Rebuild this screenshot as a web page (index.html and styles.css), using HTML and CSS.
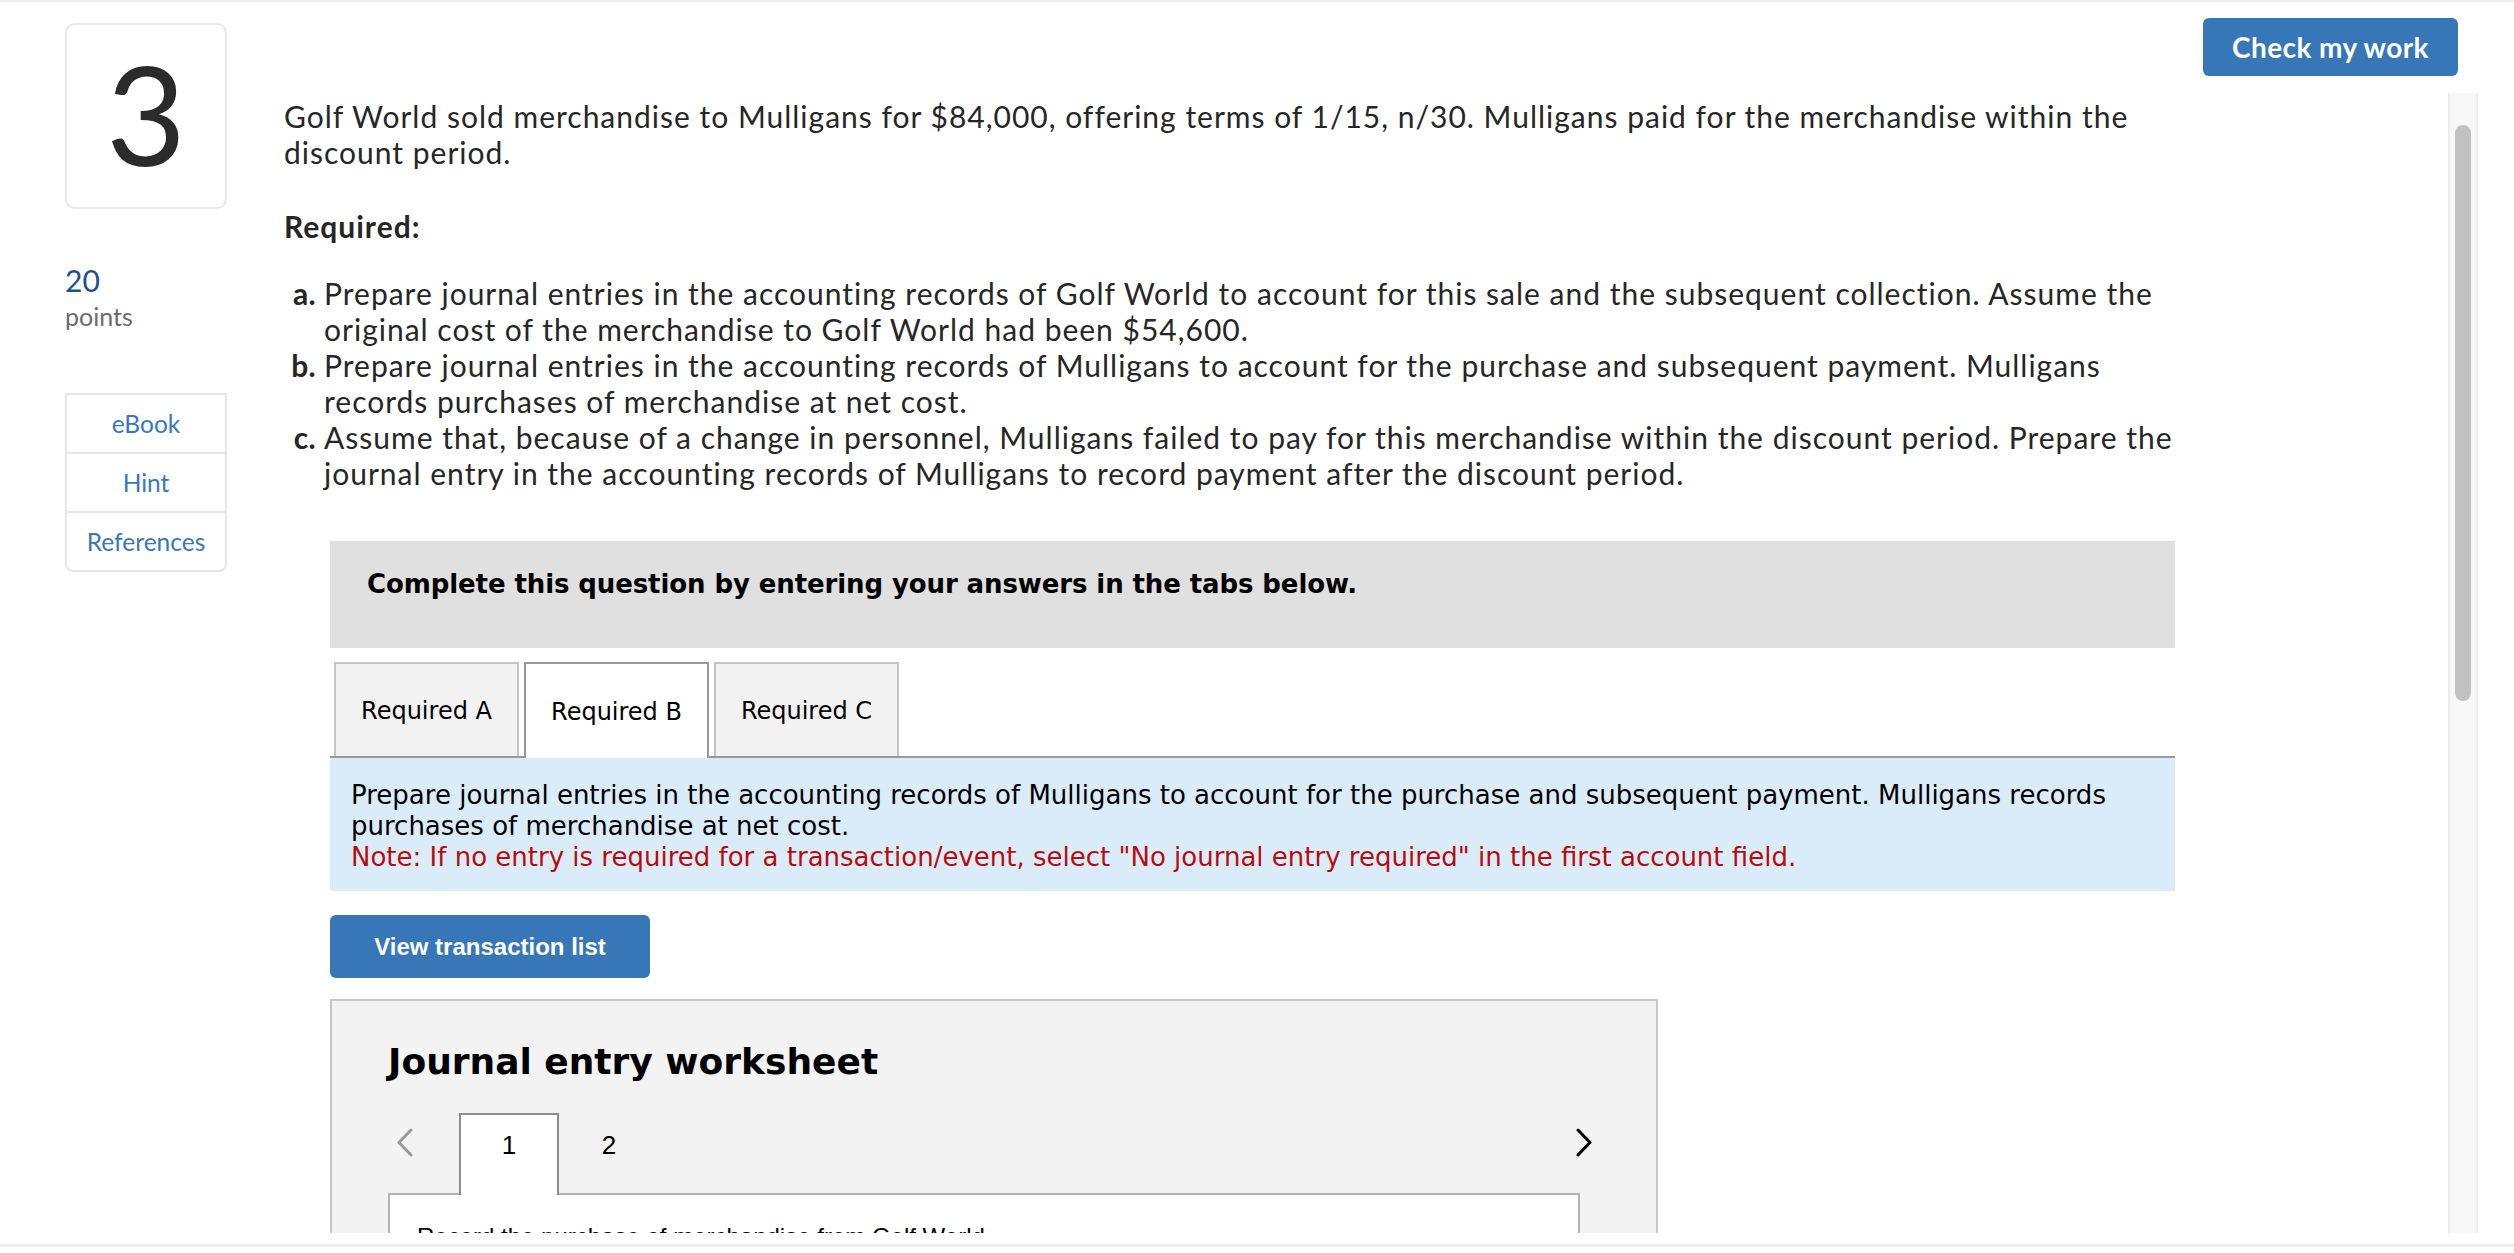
FILE: index.html
```html
<!DOCTYPE html>
<html lang="en">
<head>
  <meta charset="UTF-8">
  <meta name="viewport" content="width=device-width, initial-scale=1.0">
  <title>Question 3</title>
  <link rel="stylesheet" href="styles.css">
</head>
<body>
  <div class="top-rule"></div>
  <div class="page">
    <aside class="sidebar">
      <div class="qnum">3</div>
      <div class="points">
        <span class="points-value">20</span>
        <span class="points-label">points</span>
      </div>
      <ul class="tools">
        <li><a href="#">eBook</a></li>
        <li><a href="#">Hint</a></li>
        <li><a href="#">References</a></li>
      </ul>
    </aside>

    <main class="question">
      <p class="intro">Golf World sold merchandise to Mulligans for $84,000, offering terms of 1/15, n/30. Mulligans paid for the merchandise within the discount period.</p>
      <p class="req-title">Required:</p>
      <ol class="req-list">
        <li><b>a.</b><span>Prepare journal entries in the accounting records of Golf World to account for this sale and the subsequent collection. Assume the original cost of the merchandise to Golf World had been $54,600.</span></li>
        <li><b>b.</b><span>Prepare journal entries in the accounting records of Mulligans to account for the purchase and subsequent payment. Mulligans records purchases of merchandise at net cost.</span></li>
        <li><b>c.</b><span>Assume that, because of a change in personnel, Mulligans failed to pay for this merchandise within the discount period. Prepare the journal entry in the accounting records of Mulligans to record payment after the discount period.</span></li>
      </ol>

      <section class="answer">
        <div class="instruction">Complete this question by entering your answers in the tabs below.</div>
        <div class="tabs">
          <button class="tab">Required A</button>
          <button class="tab active">Required B</button>
          <button class="tab">Required C</button>
        </div>
        <div class="tab-panel">
          <p>Prepare journal entries in the accounting records of Mulligans to account for the purchase and subsequent payment. Mulligans records purchases of merchandise at net cost.</p>
          <p class="note">Note: If no entry is required for a transaction/event, select "No journal entry required" in the first account field.</p>
        </div>
        <button class="btn-list">View transaction list</button>

        <div class="worksheet">
          <h2>Journal entry worksheet</h2>
          <div class="ws-nav">
            <button class="ws-arrow prev">
              <svg width="17" height="29" viewBox="0 0 17 29"><polyline points="15,2 3,14.5 15,27" fill="none" stroke="#9a9a9a" stroke-width="3" stroke-linecap="round" stroke-linejoin="round"/></svg>
            </button>
            <span class="ws-tab active">1</span>
            <span class="ws-tab">2</span>
            <button class="ws-arrow next">
              <svg width="17" height="29" viewBox="0 0 17 29"><polyline points="2,2 14,14.5 2,27" fill="none" stroke="#000" stroke-width="3" stroke-linecap="round" stroke-linejoin="round"/></svg>
            </button>
          </div>
          <div class="ws-body">
            <p>Record the purchase of merchandise from Golf World.</p>
          </div>
        </div>
      </section>
    </main>

    <div class="rail">
      <button class="check">Check my work</button>
      <div class="scrollbar"><div class="thumb"></div></div>
    </div>
  </div>
  <div class="bottom-rule"></div>
</body>
</html>
```

FILE: styles.css
```css
body {
  margin: 0;
  height: 1253px;
  overflow: hidden;
  background: #fff;
  font-family: Lato, "Open Sans", sans-serif;
  color: #262626;
}

.top-rule {
  height: 2px;
  background: #ececec;
}

.page {
  display: flex;
  height: 1231px;
  overflow: hidden;
}

/* left column */
.sidebar {
  flex: none;
  width: 162px;
  margin-left: 65px;
  padding-top: 21px;
}

.qnum {
  box-sizing: border-box;
  height: 186px;
  border: 2px solid #e8e8e8;
  border-radius: 10px;
  display: flex;
  align-items: center;
  justify-content: center;
  padding-bottom: 6px;
  font-size: 138px;
  line-height: 1;
  color: #2b2b2b;
}

.points {
  margin-top: 53px;
  display: flex;
  flex-direction: column;
}

.points-value {
  font-size: 30px;
  line-height: 36px;
  color: #1d4f8f;
}

.points-label {
  font-size: 25px;
  line-height: 36px;
  color: #6b6b6b;
}

.tools {
  list-style: none;
  margin: 59px 0 0;
  padding: 0;
  border: 2px solid #e6e6e6;
  border-radius: 0 0 8px 8px;
}

.tools li {
  height: 57px;
  line-height: 57px;
  text-align: center;
  font-size: 24.5px;
}

.tools li + li {
  border-top: 2px solid #e6e6e6;
}

.tools a {
  color: #3877be;
  text-decoration: none;
}

/* question */
.question {
  flex: none;
  width: 1905px;
  margin-left: 57px;
  font-size: 30px;
  letter-spacing: 1px;
  line-height: 36px;
  color: #262626;
}

.intro {
  margin: 96px 0 0;
}

.req-title {
  margin: 38px 0 0;
  font-weight: bold;
}

.req-list {
  list-style: none;
  margin: 31px 0 0;
  padding: 0;
}

.req-list li {
  display: grid;
  grid-template-columns: 32px 1fr;
  column-gap: 8px;
}

.req-list b {
  text-align: right;
  letter-spacing: 0.3px;
}

/* answer area */
.answer {
  width: 1845px;
  margin: 50px 0 0 46px;
  font-family: "DejaVu Sans", Verdana, sans-serif;
  font-size: 26px;
  line-height: 31px;
  letter-spacing: 0;
  color: #000;
}

.instruction {
  box-sizing: border-box;
  height: 107px;
  padding: 28px 37px 0;
  background: #e0e0e0;
  font-weight: bold;
  letter-spacing: -0.1px;
}

.tabs {
  display: flex;
  align-items: flex-end;
  gap: 5px;
  margin-top: 14px;
  padding-left: 4px;
  border-bottom: 2px solid #999;
}

.tab {
  box-sizing: border-box;
  width: 185px;
  height: 94px;
  padding: 33px 0 30px;
  border: 2px solid #c4c4c4;
  border-bottom: 0;
  background: #f2f2f2;
  font: inherit;
  font-size: 24px;
  line-height: 29px;
  color: #000;
  text-align: center;
}

.tab.active {
  height: 96px;
  margin-bottom: -2px;
  background: #fff;
  border-color: #999;
}

.tab-panel {
  padding: 22px 21px 18px;
  background: #daecf9;
}

.tab-panel p {
  margin: 0;
}

.note {
  color: #b80c0c;
}

.btn-list {
  display: block;
  width: 320px;
  height: 63px;
  margin-top: 24px;
  border: 0;
  border-radius: 6px;
  background: #3777b7;
  color: #fff;
  font: bold 24px "Liberation Sans", Arial, sans-serif;
}

.worksheet {
  box-sizing: border-box;
  width: 1328px;
  height: 320px;
  margin-top: 21px;
  padding: 39px 76px 0 56px;
  border: 2px solid #c6c6c6;
  background: #f3f3f3;
}

.worksheet h2 {
  margin: 0;
  font-size: 36px;
  line-height: 44px;
  font-weight: bold;
}

.ws-nav {
  display: flex;
  align-items: flex-end;
  margin-top: 29px;
  font-family: "Liberation Sans", Arial, sans-serif;
  font-size: 26px;
  line-height: 30px;
}

.ws-arrow {
  align-self: flex-start;
  width: 17px;
  height: 29px;
  margin-top: 15px;
  padding: 0;
  border: 0;
  background: none;
}

.ws-arrow svg {
  display: block;
}

.ws-arrow.prev {
  margin-left: 8px;
  margin-right: 46px;
}

.ws-arrow.next {
  margin-left: auto;
  margin-right: -13px;
}

.ws-tab {
  box-sizing: border-box;
  width: 100px;
  height: 80px;
  padding-top: 15px;
  border: 2px solid transparent;
  border-bottom: 0;
  text-align: center;
}

.ws-tab.active {
  position: relative;
  height: 82px;
  margin-bottom: -2px;
  border-color: #8c8c8c;
  background: #fff;
}

.ws-body {
  height: 200px;
  padding: 28px 27px;
  border: 2px solid #b4b4b4;
  background: #fff;
  font: 24px/28px "Liberation Sans", Arial, sans-serif;
}

.ws-body p {
  margin: 0;
}

/* right rail */
.rail {
  flex: none;
  width: 275px;
  margin-left: 14px;
  display: flex;
  flex-direction: column;
  align-items: flex-start;
}

.check {
  width: 255px;
  height: 58px;
  margin-top: 16px;
  border: 0;
  border-radius: 6px;
  background: #3777b7;
  color: #fff;
  font: bold 28px Lato, sans-serif;
  letter-spacing: 0.4px;
}

.scrollbar {
  align-self: flex-end;
  flex: 1;
  box-sizing: border-box;
  width: 30px;
  margin-top: 17px;
  padding-top: 32px;
  border-left: 2px solid #ececec;
  border-right: 2px solid #ececec;
  background: #f8f8f8;
}

.thumb {
  width: 16px;
  height: 576px;
  margin: 0 auto;
  border-radius: 8px;
  background: #c1c1c1;
}

.bottom-rule {
  height: 3px;
  margin-top: 11px;
  background: #eee;
}
```
